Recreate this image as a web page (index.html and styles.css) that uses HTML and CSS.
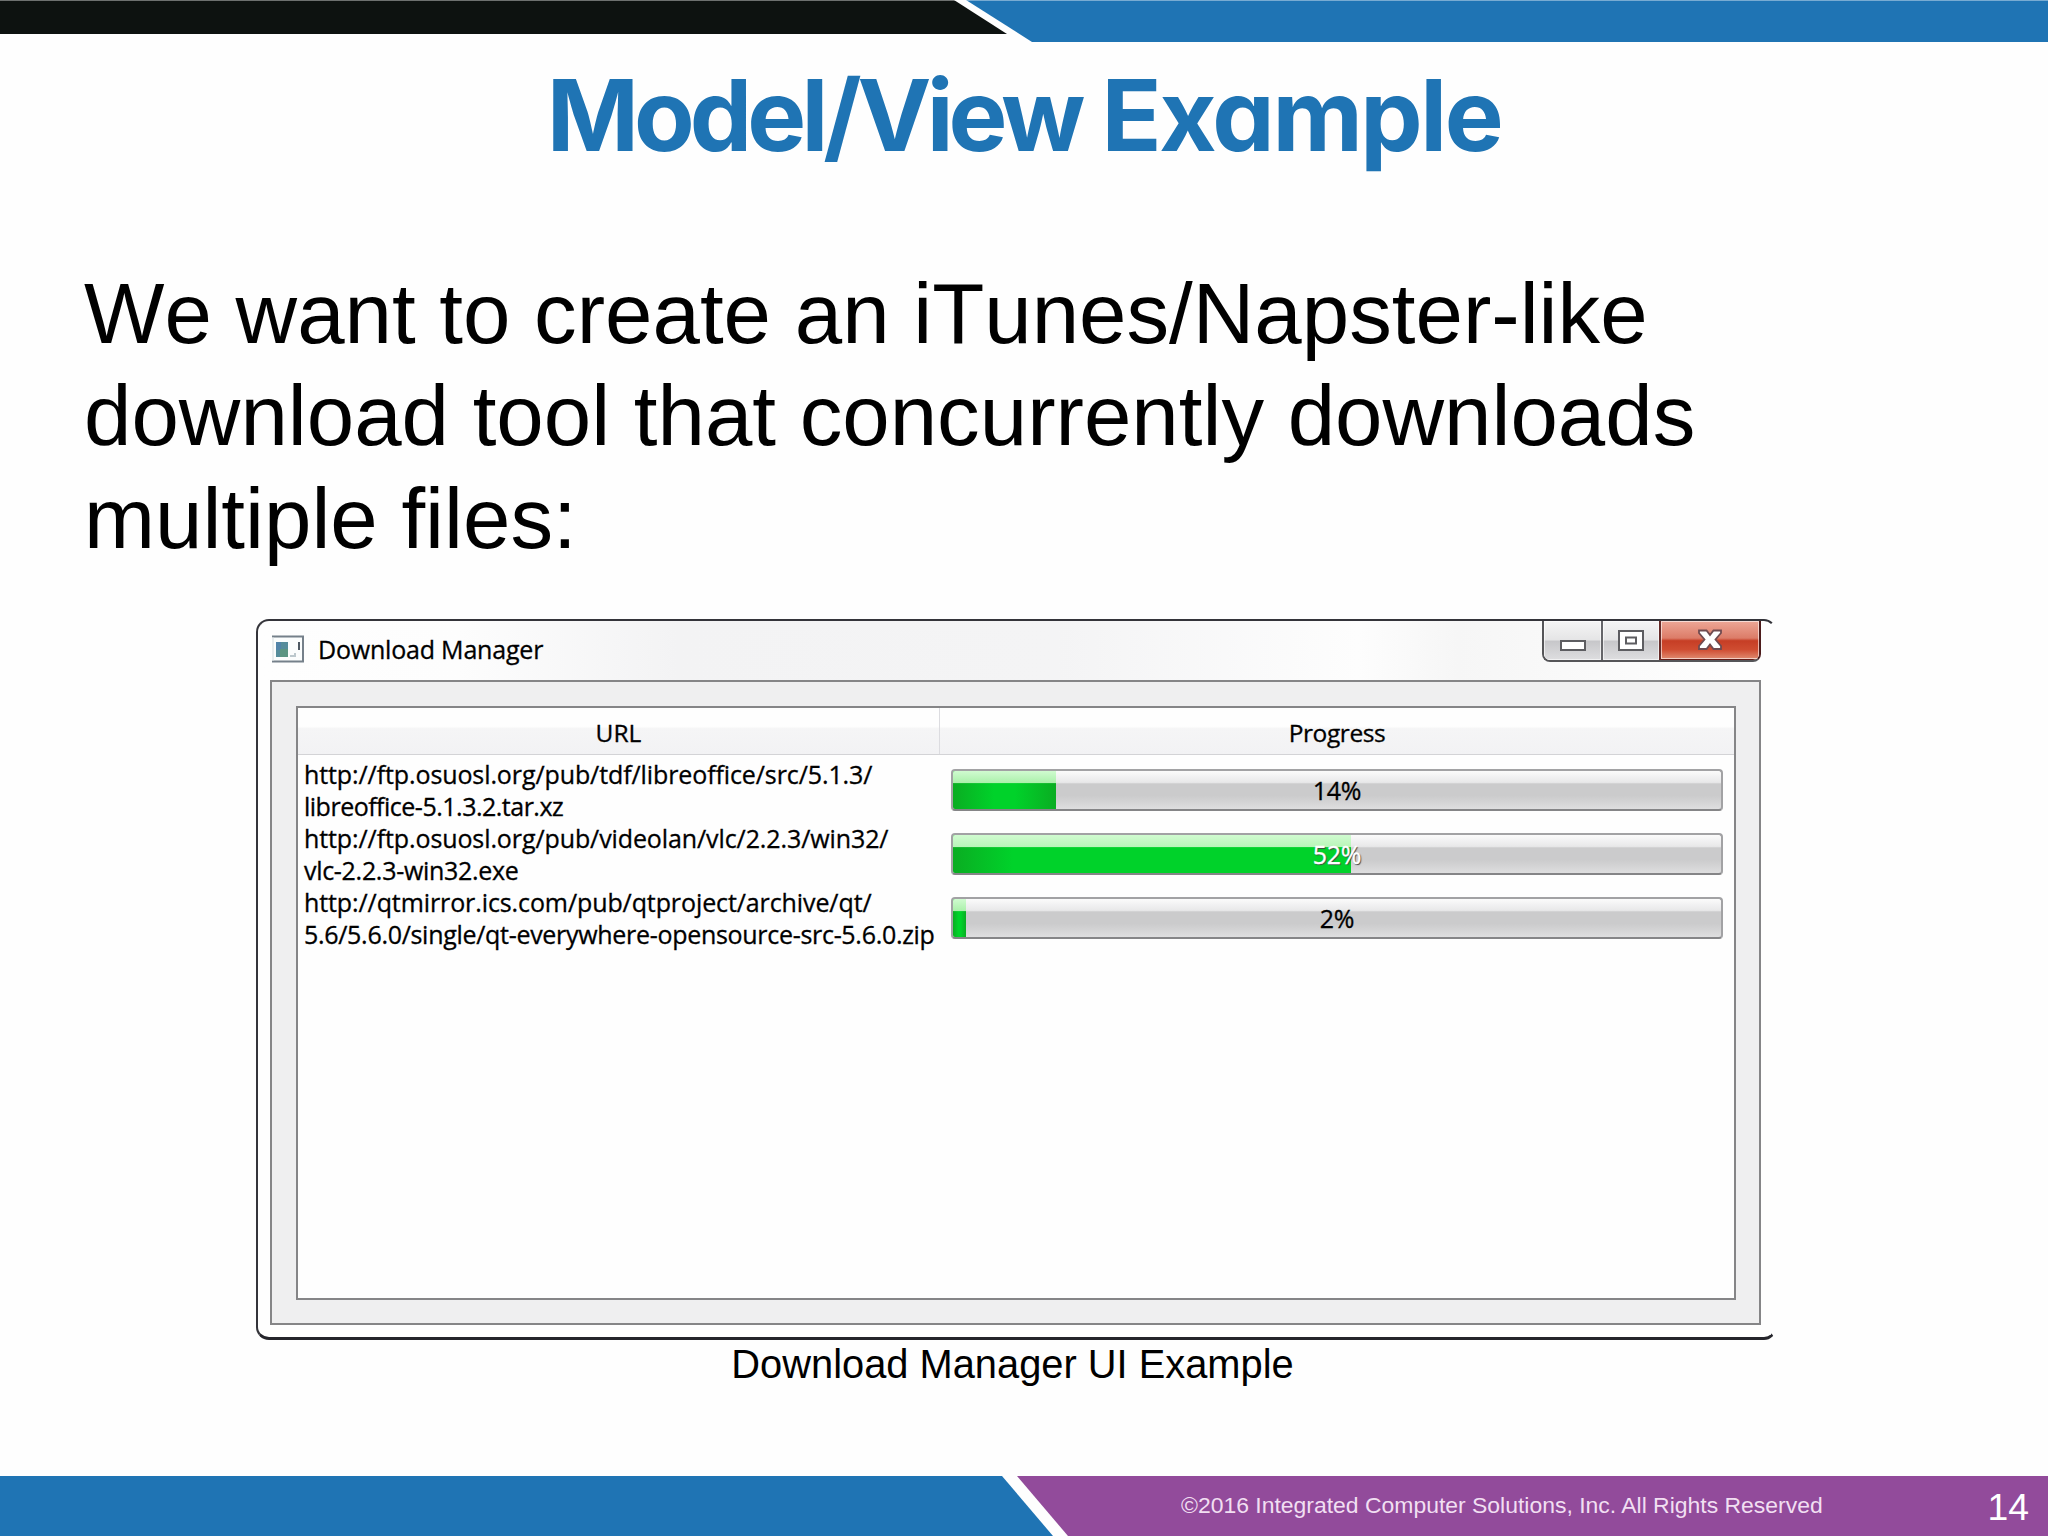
FILE: index.html
```html
<!DOCTYPE html>
<html lang="en">

<head>
  <meta charset="UTF-8">
  <meta name="viewport" content="width=device-width, initial-scale=1.0">
  <title>Model/View Example</title>
  <link rel="stylesheet" href="styles.css">
</head>

<body>
  <div class="slide">
    <svg class="top-bar" viewBox="0 0 2048 42">
      <polygon points="0,0 954,0 1007,34 0,34" fill="#0d1210" />
      <polygon points="966,0 2048,0 2048,42 1032,42" fill="#1f74b4" />
      <rect width="2048" height="1" fill="#fff" fill-opacity="0.4" />
    </svg>

    <h1><span class="tight">Model/View</span> Example</h1>

    <p class="intro">We want to create an iTunes/Napster-like<br>download tool that concurrently downloads<br>multiple files:</p>

    <figure>
      <div class="window">
        <div class="title-bar">
          <svg class="app-icon" viewBox="0 0 32 28">
            <rect x="1" y="1" width="30" height="26" fill="#fbfdfd" />
            <path d="M0 1.5H31V26.5H0" fill="none" stroke="#75808a" stroke-width="2" />
            <path d="M1 2V26" stroke="#d5dde0" stroke-width="1" />
            <rect x="4" y="7" width="12" height="15" fill="#568d9b" />
            <rect x="4" y="7" width="5" height="8" fill="#5284a9" />
            <rect x="8" y="14" width="8" height="8" fill="#5b9582" />
            <path d="M27 7V15" stroke="#4e5963" stroke-width="2" />
            <path d="M18 21H24M23 18V22" stroke="#bcc8cd" stroke-width="2" />
          </svg>
          <span class="window-title">Download Manager</span>
          <div class="window-buttons">
            <div class="btn min">
              <svg viewBox="0 0 26 12"><rect x="1" y="1" width="24" height="9" fill="#fff" stroke="#5d5d61" stroke-width="2" /></svg>
            </div>
            <div class="btn max">
              <svg viewBox="0 0 26 22">
                <rect x="1" y="1" width="24" height="19" fill="#fff" stroke="#5d5d61" stroke-width="2" />
                <rect x="8" y="7.5" width="10" height="6" fill="#fff" stroke="#5d5d61" stroke-width="2" />
              </svg>
            </div>
            <div class="btn close">
              <svg viewBox="0 0 24 22"><path d="M1 1.5H8.5L12 6L15.5 1.5H23V4L17.5 10.5L23 17V20H15.5L12 15.5L8.5 20H1V17L6.5 10.5L1 4Z" fill="#fff" stroke="#704b50" stroke-width="1.8" /></svg>
            </div>
          </div>
        </div>

        <div class="client">
          <div class="table">
            <div class="head">
              <div class="url-col">URL</div>
              <div class="progress-col">Progress</div>
            </div>
            <div class="row">
              <div class="url"><span class="wide">http://ftp.osuosl.org/pub/tdf/libreoffice/src/5.1.3/</span><br><span class="narrow">libreoffice-5.1.3.2.tar.xz</span></div>
              <div class="bar">
                <div class="fill" style="width: 13.4%"></div>
                <span class="label">14%</span>
              </div>
            </div>
            <div class="row">
              <div class="url"><span class="wide">http://ftp.osuosl.org/pub/videolan/vlc/2.2.3/win32/</span><br>vlc-2.2.3-win32.exe</div>
              <div class="bar">
                <div class="fill long" style="width: 51.8%"></div>
                <span class="label light">52%</span>
              </div>
            </div>
            <div class="row">
              <div class="url"><span class="wide">http://qtmirror.ics.com/pub/qtproject/archive/qt/</span><br>5.6/5.6.0/single/qt-everywhere-opensource-src-5.6.0.zip</div>
              <div class="bar">
                <div class="fill" style="width: 1.7%"></div>
                <span class="label">2%</span>
              </div>
            </div>
          </div>
        </div>
      </div>
      <figcaption>Download Manager UI Example</figcaption>
    </figure>

    <footer>
      <div class="footer-blue"></div>
      <div class="footer-purple">
        <span class="copyright">©2016 Integrated Computer Solutions, Inc. All Rights Reserved</span>
        <span class="page">14</span>
      </div>
    </footer>
  </div>
</body>

</html>
```
FILE: styles.css
```css
* {
  box-sizing: border-box;
}

body {
  margin: 0;
  font-family: "Liberation Sans", Arial, sans-serif;
  background: #fefefe;
  color: #000;
}

.slide {
  width: 2048px;
  height: 1536px;
  display: flex;
  flex-direction: column;
  overflow: hidden;
}

.top-bar {
  display: block;
  width: 2048px;
  height: 42px;
}

h1 {
  margin: 23px 0 0;
  height: 100px;
  font-family: Inter, sans-serif;
  font-size: 99px;
  line-height: 100px;
  font-weight: 700;
  font-feature-settings: "cv11";
  letter-spacing: -2.4px;
  text-align: center;
  color: #1f74b4;
}

.tight {
  letter-spacing: -4.9px;
}

.intro {
  margin: 98px 0 0 84px;
  font-size: 85.25px;
  line-height: 102.4px;
  font-kerning: none;
  white-space: nowrap;
}

figure {
  margin: 49px 0 0 256px;
  width: 1520px;
}

figcaption {
  margin-top: 1px;
  font-size: 39.85px;
  line-height: 46px;
  text-align: center;
  padding-right: 7px;
}

/* window */
.window {
  height: 721px;
  padding: 0 13px 0 12px;
  border: 2px solid #34343a;
  border-bottom: 3px solid #25252b;
  border-right-color: transparent;
  border-radius: 13px 12px 12px 13px;
  background: linear-gradient(to right, #fefefe 0, #fdfdfd 200px, #f3f3f4 420px, #f4f4f5 800px, #fdfdfd 1100px, #f6f6f6 1200px, #fefefe 1480px) top / 100% 60px no-repeat, #fefefe;
  font-family: "Open Sans", "Noto Sans", sans-serif;
  -webkit-text-stroke: 0.3px;
}

.title-bar {
  height: 59px;
  display: flex;
  align-items: flex-start;
}

.app-icon {
  width: 32px;
  height: 28px;
  margin: 14px 0 0 2px;
}

.window-title {
  margin: 11px 0 0 14px;
  font-size: 25px;
  line-height: 34px;
  letter-spacing: -0.2px;
}

.window-buttons {
  display: flex;
  margin-left: auto;
  width: 219px;
  height: 41px;
  border: 2px solid #555558;
  border-top: 0;
  border-right-color: #4c1c1c;
  border-radius: 0 0 8px 8px;
  overflow: hidden;
}

.btn {
  display: flex;
  justify-content: center;
  align-items: center;
  background: linear-gradient(#f5f5f5 0, #e5e5e6 48%, #c7c7ca 52%, #dedee0 100%);
  box-shadow: inset 0 0 0 1px rgba(255, 255, 255, 0.6);
}

.btn svg {
  display: block;
}

.min {
  width: 59px;
  border-right: 2px solid #66666a;
}

.min svg {
  width: 26px;
  height: 12px;
  margin-top: 11px;
}

.max {
  width: 58px;
  border-right: 2px solid #662b28;
}

.max svg {
  width: 26px;
  height: 22px;
}

.close {
  flex: 1;
  border-bottom: 1px solid #641d18;
  background: linear-gradient(#eda797 0, #dc7c68 45%, #c63e25 52%, #cf4c31 75%, #e08b70 100%);
}

.close svg {
  width: 24px;
  height: 22px;
}

.client {
  width: 1491px;
  height: 645px;
  padding: 24px 23px 0 24px;
  border: 2px solid #858587;
  background: #efeff0;
}

.table {
  height: 594px;
  border: 2px solid #858587;
  background: #fefefe;
  font-size: 25px;
}

.head {
  display: flex;
  height: 47px;
  margin-bottom: 2px;
  border-bottom: 1px solid #d3d3d6;
  background: linear-gradient(#fefefe 0, #fefefe 40%, #f5f5f6 45%, #f2f2f4 100%);
  line-height: 49px;
  font-size: 24.5px;
  text-align: center;
}

.url-col {
  width: 642px;
  border-right: 1px solid #dcdce0;
}

.progress-col {
  flex: 1;
  letter-spacing: -0.4px;
}

/* rows */
.row {
  display: flex;
  height: 64px;
}

.url {
  width: 653px;
  padding: 1px 0 0 6px;
  line-height: 32px;
  letter-spacing: -0.3px;
  white-space: nowrap;
}

.wide {
  letter-spacing: -0.1px;
}

.narrow {
  letter-spacing: -0.5px;
}

.bar {
  position: relative;
  width: 772px;
  height: 42px;
  margin-top: 12px;
  border: 2px solid #a2a2a4;
  border-bottom-color: #858587;
  border-radius: 4px;
  background: linear-gradient(#fbfbfb 0, #e8e8e9 30%, #cbcbcc 34%, #cbcbcc 65%, #dededf 100%);
  overflow: hidden;
}

.fill {
  height: 100%;
  background: linear-gradient(#d0fbd0 0, #aaf0aa 32%, transparent 33%), linear-gradient(to right, #0aad22 0, #00d22a 40%, #00d22a 60%, #0aad22 100%);
}

.fill.long {
  background: linear-gradient(#d0fbd0 0, #b8f5b8 32%, transparent 33%), linear-gradient(to right, #0aad22 0, #00d22a 60px, #00d22a 100%);
}

/* percentage drawn over the bar */
.label {
  position: absolute;
  inset: 0;
  text-align: center;
  line-height: 39px;
  letter-spacing: -0.2px;
}

.light {
  color: #fff;
  text-shadow: 1px 1px 1px #444;
}

footer {
  display: flex;
  height: 60px;
  margin-top: auto;
}

.footer-blue {
  width: 1053px;
  background: #1f74b4;
  clip-path: polygon(0 0, 1002px 0, 100% 100%, 0 100%);
}

.footer-purple {
  display: flex;
  flex: 1;
  margin-left: -36px;
  padding: 0 19px 0 164px;
  justify-content: space-between;
  background: #924b9b;
  color: #fff;
  clip-path: polygon(0 0, 100% 0, 100% 100%, 51px 100%);
}

.copyright {
  font-size: 22.95px;
  line-height: 58px;
  color: #f1dff2;
}

.page {
  font-size: 37.3px;
  line-height: 62px;
}
```
